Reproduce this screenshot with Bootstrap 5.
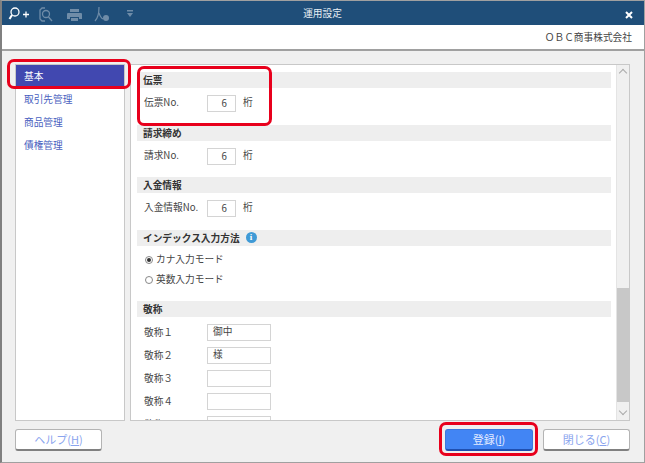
<!DOCTYPE html>
<html lang="ja">
<head>
    <meta charset="UTF-8">
    <title>運用設定</title>
    <link href="https://cdn.jsdelivr.net/npm/bootstrap@5.3.0/dist/css/bootstrap.min.css" rel="stylesheet">
    <style>
        html, body { height: 100%; overflow: hidden; }
        body { position: relative; background: #f0f0f0; font-family: "Noto Sans CJK JP", "Liberation Sans", sans-serif; font-size: 9.7px; color: #444; }
        .app-win { height: 463px; border: 1px solid #a0a0a0; border-left: 2px solid #808080; display: flex; flex-direction: column; }
        .title-bar { height: 24px; background: #1f4e79; padding-left: 6px; flex-shrink: 0; }
        .title-text { position: absolute; left: 0; right: 0; top: 6px; text-align: center; line-height: 14px; color: #e8eef4; }
        .tool-ico { width: 28px; height: 18px; display: block; }
        .company { height: 26px; background: #fff; border-bottom: 2px solid #a0a0a0; padding-right: 12px; line-height: 24px; text-align: right; flex-shrink: 0; }
        .main-area { height: 370px; padding: 13px 14px 0 13px; gap: 5px; flex-shrink: 0; }
        .side-list { width: 110px; background: #fff; border: 1px solid #c8c8c8; flex-shrink: 0; }
        .side-list div { height: 23px; line-height: 23px; padding-left: 8px; color: #4a5fc0; }
        .side-list .on { background: #4148b0; color: #fff; }
        .form-pane { flex: 1; background: #fff; border: 1px solid #c8c8c8; overflow: hidden; }
        .form-body { flex: 1; padding: 7px 5px 0 6px; overflow: hidden; }
        .sec-head { height: 16px; line-height: 16px; background: #eee; padding-left: 6px; font-weight: 700; color: #333; }
        .sec-row { height: 36.5px; padding: 7px 0 0 7px; }
        .sec-row label, .name-row label { margin: 0; width: 63px; }
        .num-box { width: 29px; height: 17px; border: 1px solid #d4d4d4; text-align: right; padding-right: 8px; line-height: 15px; margin-right: 7px; }
        .radio-row { height: 20px; padding-left: 8px; gap: 3px; }
        .radio-dot { width: 8px; height: 8px; border: 1px solid #888; border-radius: 50%; position: relative; }
        .radio-dot.sel::after { content: ""; position: absolute; left: 1px; top: 1px; width: 4px; height: 4px; background: #333; border-radius: 50%; }
        .name-row { height: 23px; padding-left: 7px; flex-shrink: 0; }
        .name-box { width: 64px; height: 17px; border: 1px solid #d4d4d4; padding-left: 5px; line-height: 13px; }
        .info-dot { width: 11px; height: 11px; border-radius: 50%; background: #3f9ad6; color: #fff; font: 700 9px/11px "Liberation Serif", serif; text-align: center; margin-left: 6px; }
        .scroll-track { width: 13px; background: #f0f0f0; border-left: 1px solid #e4e4e4; position: relative; flex-shrink: 0; }
        .scroll-thumb { position: absolute; left: 0; right: 0; top: 223px; height: 114px; background: #c8c8c8; }
        .scroll-arrow { position: absolute; left: 3px; width: 6px; height: 6px; border-left: 1px solid #aaa; border-top: 1px solid #aaa; transform: rotate(45deg); }
        .scroll-arrow.up { top: 5px; }
        .scroll-arrow.down { bottom: 6px; transform: rotate(225deg); }
        .foot-bar { padding: 8px 14px 0 13px; }
        .foot-btn { height: 22px; width: 87px; border: 1px solid #b4b4b4; border-bottom: 2px solid #808080; border-radius: 3px; background: #fff; color: #8aa4ee; font-size: 11px; line-height: 17px; padding: 0; text-align: center; }
        .foot-btn.save-btn { width: 88px; background: #4285f4; border-color: #3d78dc; border-bottom-color: #1f4fb0; color: #e4ecff; margin-right: 10px; }
        .foot-btn u { text-underline-offset: 1px; }
        .red-mark { position: absolute; border: 3px solid #e8001c; border-radius: 7px; pointer-events: none; }
        .mark-side { left: 7px; top: 59px; width: 124px; height: 30px; }
        .mark-sec { left: 137px; top: 66px; width: 135px; height: 60px; }
        .mark-save { left: 439px; top: 422px; width: 99px; height: 34px; }
    </style>
</head>
<body>
    <div class="app-win">
        <div class="title-bar d-flex align-items-center">
            <svg class="tool-ico" viewBox="0 0 28 18" fill="none" stroke="#fff" stroke-width="1.3"><circle cx="7" cy="8" r="4"/><path d="M4 11 1.500 15" stroke-width="2"/><path d="M15 10.500h6M18 7.500v6"/></svg>
            <svg class="tool-ico" viewBox="0 0 28 18" fill="none" stroke="#6f8ca8" stroke-width="1.3"><path d="M9 4H6L4 6v9l2 2h3"/><circle cx="10" cy="10" r="3.500"/><path d="M12.500 13 16 17"/></svg>
            <svg class="tool-ico" viewBox="0 0 28 18" fill="#6f8ca8"><path d="M6 5h9v3H6zM4 9h13a1 1 0 0 1 1 1v5h-3v-2H6v2H3v-5a1 1 0 0 1 1-1zM7 14h7v3H7z"/></svg>
            <svg class="tool-ico" viewBox="0 0 28 18" fill="none" stroke="#6f8ca8" stroke-width="1.2"><path d="M7 3c0 6-1 11-4 14M7 9c1 3 2 5 4 6"/><circle cx="14" cy="14" r="3" fill="#6f8ca8" stroke="none"/></svg>
            <svg class="tool-ico" viewBox="0 0 28 18" fill="#6f8ca8"><path d="M7 6h6v1.500H7zM7 9h6l-3 4z"/></svg>
        </div>
        <div class="title-text">運用設定</div>
        <svg class="position-absolute" style="left:625px;top:11px" width="8" height="8" viewBox="0 0 8 8" stroke="#fff" stroke-width="2"><path d="M1 1l6 6M7 1 1 7"/></svg>
        <div class="company">ＯＢＣ商事株式会社</div>
        <div class="main-area d-flex">
            <div class="side-list">
                <div class="on">基本</div>
                <div>取引先管理</div>
                <div>商品管理</div>
                <div>債権管理</div>
            </div>
            <div class="form-pane d-flex">
                <div class="form-body d-flex flex-column">
                    <div class="sec-head flex-shrink-0">伝票</div>
                    <div class="sec-row d-flex flex-shrink-0"><label>伝票No.</label><div class="num-box">6</div>桁</div>
                    <div class="sec-head flex-shrink-0">請求締め</div>
                    <div class="sec-row d-flex flex-shrink-0"><label>請求No.</label><div class="num-box">6</div>桁</div>
                    <div class="sec-head flex-shrink-0">入金情報</div>
                    <div class="sec-row d-flex flex-shrink-0"><label>入金情報No.</label><div class="num-box">6</div>桁</div>
                    <div class="sec-head d-flex align-items-center flex-shrink-0">インデックス入力方法<span class="info-dot">i</span></div>
                    <div class="radio-row d-flex align-items-center flex-shrink-0 mt-1"><span class="radio-dot sel"></span>カナ入力モード</div>
                    <div class="radio-row d-flex align-items-center flex-shrink-0"><span class="radio-dot"></span>英数入力モード</div>
                    <div class="flex-shrink-0" style="height:11px"></div>
                    <div class="sec-head flex-shrink-0">敬称</div>
                    <div class="name-row d-flex align-items-center mt-1"><label>敬称１</label><div class="name-box">御中</div></div>
                    <div class="name-row d-flex align-items-center"><label>敬称２</label><div class="name-box">様</div></div>
                    <div class="name-row d-flex align-items-center"><label>敬称３</label><div class="name-box"></div></div>
                    <div class="name-row d-flex align-items-center"><label>敬称４</label><div class="name-box"></div></div>
                    <div class="name-row d-flex align-items-center"><label>敬称５</label><div class="name-box"></div></div>
                </div>
                <div class="scroll-track">
                    <div class="scroll-arrow up"></div>
                    <div class="scroll-thumb"></div>
                    <div class="scroll-arrow down"></div>
                </div>
            </div>
        </div>
        <div class="foot-bar d-flex">
            <button type="button" class="foot-btn">ヘルプ(<u>H</u>)</button>
            <button type="button" class="foot-btn save-btn ms-auto">登録(<u>I</u>)</button>
            <button type="button" class="foot-btn">閉じる(<u>C</u>)</button>
        </div>
    </div>
    <div class="red-mark mark-side"></div>
    <div class="red-mark mark-sec"></div>
    <div class="red-mark mark-save"></div>
    <script src="https://cdn.jsdelivr.net/npm/bootstrap@5.3.0/dist/js/bootstrap.bundle.min.js"></script>
</body>
</html>
